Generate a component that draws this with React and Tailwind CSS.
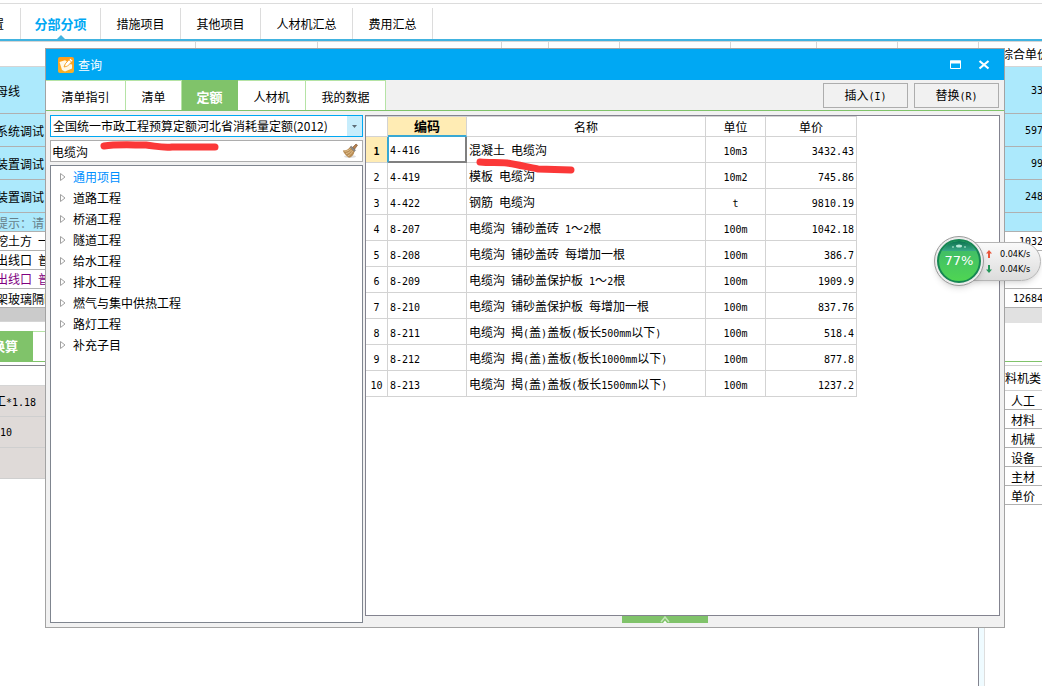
const mainTabs = ['措施项目', '其他项目', '人材机汇总', '费用汇总'];

const queryTabs = [
  { label: '清单指引', width: 'w-20' },
  { label: '清单', width: 'w-14' },
  { label: '定额', width: 'w-14', active: true },
  { label: '人材机', width: 'w-17' },
  { label: '我的数据', width: 'w-20' },
];

const chapters = [
  '通用项目',
  '道路工程',
  '桥涵工程',
  '隧道工程',
  '给水工程',
  '排水工程',
  '燃气与集中供热工程',
  '路灯工程',
  '补充子目',
];

const quotas = [
  { code: '4-416', name: '混凝土 电缆沟', unit: '10m3', price: '3432.43' },
  { code: '4-419', name: '模板 电缆沟', unit: '10m2', price: '745.86' },
  { code: '4-422', name: '钢筋 电缆沟', unit: 't', price: '9810.19' },
  { code: '8-207', name: '电缆沟 铺砂盖砖 1～2根', unit: '100m', price: '1042.18' },
  { code: '8-208', name: '电缆沟 铺砂盖砖 每增加一根', unit: '100m', price: '386.7' },
  { code: '8-209', name: '电缆沟 铺砂盖保护板 1～2根', unit: '100m', price: '1909.9' },
  { code: '8-210', name: '电缆沟 铺砂盖保护板 每增加一根', unit: '100m', price: '837.76' },
  { code: '8-211', name: '电缆沟 揭(盖)盖板(板长500mm以下)', unit: '100m', price: '518.4' },
  { code: '8-212', name: '电缆沟 揭(盖)盖板(板长1000mm以下)', unit: '100m', price: '877.8' },
  { code: '8-213', name: '电缆沟 揭(盖)盖板(板长1500mm以下)', unit: '100m', price: '1237.2' },
];

const blueRow = 'bg-[#ace9fc] border-[#b0b0b0]';

const leftRows = [
  { text: '母线', style: `h-[47px] ${blueRow}` },
  { text: '系统调试', style: `h-[33px] ${blueRow}` },
  { text: '装置调试', style: `h-[33px] ${blueRow}` },
  { text: '装置调试', style: `h-[33px] ${blueRow}` },
  { text: '提示：请', style: `h-[19px] text-[#66808a] ${blueRow}` },
  { text: '挖土方 一', style: 'h-[19px] border-[#b0b0b0]' },
  { text: '出线口 普', style: 'h-[19px] border-[#b0b0b0]' },
  { text: '出线口 普', style: 'h-[19px] border-[#b0b0b0] text-[#800080]' },
  { text: '架玻璃隔断', style: 'h-[19px] border-[#b0b0b0]' },
];

const rightRows = [
  { text: '33', style: `h-[47px] pl-[26px] ${blueRow}` },
  { text: '597', style: `h-[33px] pl-5 ${blueRow}` },
  { text: '99', style: `h-[33px] pl-[26px] ${blueRow}` },
  { text: '248', style: `h-[33px] pl-5 ${blueRow}` },
  { text: '', style: `h-[19px] ${blueRow}` },
  { text: '1032', style: 'h-[19px] pl-[14px] border-[#b0b0b0]' },
  { text: '', style: 'h-[38px] border-[#b0b0b0]' },
  { text: '12684', style: 'h-[19px] pl-2 border-[#b0b0b0]' },
];

const costTypes = ['人工', '材料', '机械', '设备', '主材', '单价'];

// Latin runs are set half as wide as a Chinese character
function Mixed({ text }) {
  return text.split(/([ -~]+)/).map((part, i) =>
    i % 2 ? (
      <span key={i} className="whitespace-pre font-['DejaVu_Sans_Mono',monospace] text-[10px]">{part}</span>
    ) : (
      part
    )
  );
}

function MainNav() {
  return (
    <header className="h-[42px] border-b border-[#d5d5d5] pt-[3px]">
      <nav className="flex h-[38px] items-stretch border-t border-b-2 border-t-[#dcdcdc] border-b-[#41b3e0] pt-1">
        <a href="#" className="flex w-[21px] items-center overflow-hidden border-r border-[#dcdcdc] whitespace-nowrap">
          <span className="-ml-2">置</span>
        </a>
        <a href="#" className="relative flex w-20 items-center justify-center border-r border-[#dcdcdc] text-[13px] font-bold text-[#00a8f3]">
          分部分项
          <svg className="absolute bottom-0 left-9 h-1 w-2" viewBox="0 0 8 4">
            <path d="M0 4 4 0l4 4z" fill="#41b3e0" />
          </svg>
        </a>
        {mainTabs.map(tab => (
          <a
            key={tab}
            href="#"
            className={`flex items-center justify-center border-r border-[#dcdcdc] ${tab === '人材机汇总' ? 'w-[92px]' : 'w-20'}`}
          >
            {tab}
          </a>
        ))}
      </nav>
    </header>
  );
}

function ColumnHeads() {
  return (
    <div className="flex h-[25px] border-b border-[#d5d5d5]">
      <div className="w-[196px] border-r border-[#d5d5d5]" />
      <div className="w-[122px] border-r border-[#d5d5d5]" />
      <div className="w-[184px] border-r border-[#d5d5d5]" />
      <div className="w-[47px] border-r border-[#d5d5d5]" />
      <div className="w-[71px] border-r border-[#d5d5d5]" />
      <div className="w-[111px] border-r border-[#d5d5d5]" />
      <div className="w-[86px] border-r border-[#d5d5d5]" />
      <div className="w-[81px] border-r border-[#d5d5d5]" />
      <div className="w-[81px] border-r border-[#d5d5d5]" />
      <div className="flex min-w-0 flex-1 items-center overflow-hidden pl-[22px] whitespace-nowrap">综合单价</div>
    </div>
  );
}

function LeftEdge() {
  return (
    <div className="w-[45px] overflow-hidden whitespace-nowrap">
      {leftRows.map((row, i) => (
        <div key={i} className={`flex items-center border-b pt-0.5 ${row.style}`}>
          <span className="-ml-1"><Mixed text={row.text} /></span>
        </div>
      ))}
      <div className="h-[14px] border-b border-[#d5d5d5] bg-[#cbcbcb]" />
      <div className="mt-[9px] flex h-[31px] border-b border-[#80c36a]">
        <button type="button" className="flex w-[33px] items-center bg-[#80c36a] text-[13px] font-bold text-white">
          <span className="-ml-2">换算</span>
        </button>
        <div className="flex-1 border-t border-[#b5e3a5]" />
      </div>
      <div className="mt-[3px] h-[21px] border-t border-b border-t-[#808088] border-b-[#d5d5d5]" />
      <div className="flex h-[31px] items-center border-b border-[#cfcfcf] bg-[#dfdad8] pt-0.5">
        <span className="-ml-1.5"><Mixed text="工*1.18" /></span>
      </div>
      <div className="flex h-[31px] items-center border-b border-[#cfcfcf] bg-[#dfdad8] pt-0.5">
        <Mixed text="10" />
      </div>
      <div className="h-[31px] border-b border-[#cfcfcf] bg-[#dfdad8]" />
    </div>
  );
}

function RightEdge() {
  return (
    <div className="w-[37px] overflow-hidden whitespace-nowrap">
      {rightRows.map((row, i) => (
        <div key={i} className={`flex items-center border-b pt-0.5 ${row.style}`}>
          <Mixed text={row.text} />
        </div>
      ))}
      <div className="h-[15px] bg-[#e1e1e1]" />
      <div className="h-[39px] border-b border-[#80c36a]" />
      <div className="mt-[3px] flex h-[26px] items-center border-t border-b border-[#d0d0d0]">料机类</div>
      {costTypes.map(type => (
        <div key={type} className="flex h-[19px] items-center border-b border-[#b0b0b0] pt-0.5 pl-1.5">{type}</div>
      ))}
    </div>
  );
}

function AppIcon() {
  return (
    <svg className="h-4 w-4" viewBox="0 0 16 16">
      <defs>
        <linearGradient id="orange" x1="0" y1="0" x2="0" y2="1">
          <stop offset="0" stopColor="#ff9c1a" />
          <stop offset="1" stopColor="#f7b02a" />
        </linearGradient>
      </defs>
      <rect width="16" height="16" rx="2" fill="url(#orange)" />
      <path d="M1.500 5 7 3.200 9 4.500 5.500 9.500 9 9l2-2 3 .5 0 4L7 14.500 4 13z" fill="#fff8e6" />
      <path d="M6.200 10 7.300 6.800 12.300 1.300 15 3.500 9.700 9z" fill="#fff" stroke="#f59a13" strokeWidth=".8" />
      <path d="m11 2.800 2.400 2.200" stroke="#f59a13" strokeWidth=".8" />
    </svg>
  );
}

function Broom() {
  return (
    <svg className="h-4 w-4" viewBox="0 0 16 16">
      <ellipse cx="8" cy="13.500" rx="6" ry="1.500" fill="#ddd" />
      <path d="m10 5 4-4 1.500 1.200L12 7z" fill="#b9824e" stroke="#7b5130" strokeWidth=".6" />
      <path d="M.8 7.500C4 7.500 6.500 6.500 8 4l4.500 4.500C12 11.500 10 14 7 14.800 4 13 2 10.500.8 7.500z" fill="#b98d55" />
      <path d="M2.500 8.200c3 0 4.500-1 6-2.500M4 10.500c2.500-.3 4-1.500 5.500-3.500M5.800 12.800c2.200-.8 3.800-2.500 4.700-4.800" fill="none" stroke="#e5c795" strokeWidth=".9" />
      <path d="m8 4 1.500-.8 4 4-1 1.300z" fill="#8d8a86" stroke="#66605a" strokeWidth=".5" />
    </svg>
  );
}

function ChapterTree() {
  return (
    <ul className="flex-1 overflow-hidden border border-[#7f858f] bg-white">
      {chapters.map((chapter, i) => (
        <li key={chapter} className="flex h-[21px] items-center gap-[7px] pl-[9px]">
          <svg className="h-2 w-[6px]" viewBox="0 0 6 8">
            <path d="M.5.500 5 4 .5 7.500z" fill="#fff" stroke="#a0a0a0" />
          </svg>
          <span className={i === 0 ? 'text-[#0090ff]' : ''}>{chapter}</span>
        </li>
      ))}
    </ul>
  );
}

function QuotaTable() {
  return (
    <table className="w-[491px] table-fixed border-separate border-spacing-0 text-black">
      <colgroup>
        <col className="w-[22px]" />
        <col className="w-[79px]" />
        <col className="w-[239px]" />
        <col className="w-[60px]" />
        <col className="w-[91px]" />
      </colgroup>
      <thead>
        <tr className="h-[21px]">
          <th className="border-t border-r border-b border-[#d3d3d3] p-0" />
          <th className="border-t border-r border-b-2 border-t-[#d3d3d3] border-r-[#d3d3d3] border-b-[#38a8d4] bg-[#ffecb4] p-0 text-[13px] leading-4 font-bold">编码</th>
          <th className="border-t border-r border-b border-[#d3d3d3] p-0 leading-4 font-normal">名称</th>
          <th className="border-t border-r border-b border-[#d3d3d3] p-0 leading-4 font-normal">单位</th>
          <th className="border-t border-r border-b border-[#d3d3d3] p-0 leading-4 font-normal">单价</th>
        </tr>
      </thead>
      <tbody>
        {quotas.map((quota, i) => (
          <tr key={quota.code} className="h-[26px]">
            <td className={`border-r border-b p-0 pt-0.5 text-center leading-4 ${i === 0 ? 'border-r-[#38a8d4] border-b-[#d3d3d3] bg-[#ffecb4] font-bold' : 'border-[#d3d3d3]'}`}>
              <Mixed text={String(i + 1)} />
            </td>
            <td
              className={
                i === 0
                  ? 'border-r-2 border-b-2 border-l border-r-[#808080] border-b-[#808080] border-l-[#38a8d4] p-0 pt-0.5 pl-px leading-4'
                  : 'border-r border-b border-[#d3d3d3] p-0 pt-0.5 pl-0.5 leading-4'
              }
            >
              <Mixed text={quota.code} />
            </td>
            <td className="border-r border-b border-[#d3d3d3] p-0 pt-0.5 pl-0.5 leading-4 whitespace-nowrap"><Mixed text={quota.name} /></td>
            <td className="border-r border-b border-[#d3d3d3] p-0 pt-0.5 text-center leading-4"><Mixed text={quota.unit} /></td>
            <td className="border-r border-b border-[#d3d3d3] p-0 pt-0.5 pr-0.5 text-right leading-4"><Mixed text={quota.price} /></td>
          </tr>
        ))}
      </tbody>
    </table>
  );
}

function QueryDialog() {
  return (
    <section
      role="dialog"
      aria-labelledby="query-title"
      className="absolute top-12 right-[37px] bottom-[58px] left-[45px] flex flex-col border border-[#a3a3a3] bg-[#f1f1f1]"
    >
      <div className="flex h-[31px] shrink-0 items-center gap-1 bg-[#00a8f3] pr-[14px] pl-3 text-white">
        <AppIcon />
        <h1 id="query-title" className="flex-1 text-xs">查询</h1>
        <button type="button" aria-label="最大化" className="mr-3">
          <svg className="h-3 w-3" viewBox="0 0 12 12">
            <path d="M.5 2h10v7.500H.5z" fill="none" stroke="#fff" />
            <path d="M0 1.500h11v3H0z" fill="#fff" />
          </svg>
        </button>
        <button type="button" aria-label="关闭">
          <svg className="h-3 w-3" viewBox="0 0 12 12">
            <path d="m1.500 2 9 7.500m0-7.500-9 7.500" stroke="#fff" strokeWidth="2.200" />
          </svg>
        </button>
      </div>

      <div className="flex h-[31px] shrink-0 items-stretch border-b border-[#80c36a] pr-[5px]">
        <div role="tablist" className="flex flex-1">
          {queryTabs.map(tab => (
            <button
              key={tab.label}
              type="button"
              role="tab"
              aria-selected={!!tab.active}
              className={`border-t border-r pt-0.5 ${tab.width} ${
                tab.active ? 'border-[#80c36a] bg-[#80c36a] text-[13px] font-bold text-white' : 'border-[#b5e3a5] bg-white'
              }`}
            >
              {tab.label}
            </button>
          ))}
        </div>
        <div className="flex items-center gap-1.5">
          <button type="button" className="h-[25px] w-[85px] border border-[#adadad] pt-0.5"><Mixed text="插入(I)" /></button>
          <button type="button" className="h-[25px] w-[85px] border border-[#adadad] pt-0.5"><Mixed text="替换(R)" /></button>
        </div>
      </div>

      <div className="flex min-h-0 flex-1 gap-0.5 p-1">
        <div className="relative flex w-[313px] shrink-0 flex-col gap-[3px]">
          <div className="relative">
            <select
              aria-label="定额库"
              className="block h-[22px] w-full appearance-none border border-[#00a8f3] bg-white pl-0.5 text-xs text-black"
            >
              <option>全国统一市政工程预算定额河北省消耗量定额(2012)</option>
            </select>
            <span className="pointer-events-none absolute top-px right-px flex h-5 w-[15px] items-center justify-center bg-[#c7edfc]">
              <svg className="h-[3px] w-[5px]" viewBox="0 0 5 3">
                <path d="M0 0h5L2.500 3z" fill="#5d6b75" />
              </svg>
            </span>
          </div>
          <div className="flex h-[22px] items-center border border-[#adadad] bg-white pr-1">
            <input aria-label="查询条件" defaultValue="电缆沟" className="h-full min-w-0 flex-1 pl-px text-xs text-black" />
            <button type="button" aria-label="清除"><Broom /></button>
          </div>
          <ChapterTree />
          <svg className="pointer-events-none absolute top-6 left-[50px] h-4 w-[120px]" viewBox="0 0 120 16">
            <path d="M4 7c12-2 28-1 42-1 10 1 16 3 26 2l43 0" fill="none" stroke="#fb3838" strokeWidth="7" strokeLinecap="round" strokeLinejoin="round" />
          </svg>
        </div>

        <div className="flex min-w-0 flex-1 flex-col">
          <div className="relative flex-1 overflow-hidden border border-[#83838f] bg-white">
            <QuotaTable />
            <svg className="pointer-events-none absolute top-10 left-[110px] h-[22px] w-[102px]" viewBox="0 0 102 22">
              <path d="M4 6c10 1 18 0 27 1 12 2 20 4 31 6l33 1" fill="none" stroke="#fb3838" strokeWidth="7" strokeLinecap="round" strokeLinejoin="round" />
            </svg>
          </div>
          <button type="button" aria-label="展开" className="mr-[35px] flex h-[7px] w-[86px] items-center justify-center self-center bg-[#80c36a]">
            <svg className="h-[7px] w-[10px]" viewBox="0 0 10 7">
              <path d="M1 6 5 1l4 5" fill="none" stroke="#c3e6b8" strokeWidth="1.500" />
              <path d="M3 7 5 4.500 7 7z" fill="#fff" />
            </svg>
          </button>
        </div>
      </div>
    </section>
  );
}

function SpeedRow({ up, value }) {
  return (
    <div className="flex items-center gap-2">
      <svg className="h-2 w-[6px]" viewBox="0 0 6 8">
        {up ? <path d="M3 0 6 3.500H4V8H2V3.500H0z" fill="#e8563a" /> : <path d="M3 8 0 4.500h2V0h2v4.500h2z" fill="#25975a" />}
      </svg>
      <span>{value}</span>
    </div>
  );
}

function SpeedBall() {
  return (
    <aside className="absolute top-[236px] right-px flex items-center font-['DejaVu_Sans_Condensed','DejaVu_Sans',sans-serif]">
      <div className="relative z-10 flex h-[50px] w-[50px] items-center justify-center rounded-full border border-[#9a9a9a] bg-[#ececec] shadow-md">
        <div className="relative flex h-11 w-11 items-center justify-center overflow-hidden rounded-full border-2 border-[#168653] bg-linear-to-b from-[#3db76a] to-[#4fd552]">
          <div className="absolute inset-x-0 top-0 h-[10px] bg-linear-to-b from-[#08724f] to-[#39a886]" />
          <svg className="absolute top-0.5 left-3 h-1.5 w-4" viewBox="0 0 16 6">
            <ellipse cx="8" cy="3" rx="3" ry="1.500" fill="#b8e9d8" />
            <circle cx="2" cy="4" r="1" fill="#8bcfb5" />
            <circle cx="14" cy="4" r="1" fill="#8bcfb5" />
          </svg>
          <span className="relative font-['DejaVu_Sans',sans-serif] text-[13px] text-white">77%</span>
        </div>
      </div>
      <div className="-ml-3 flex h-[39px] w-[69px] flex-col justify-center gap-px rounded-r-full border border-[#b5b5b5] bg-linear-to-b from-[#fafafa] to-[#dcdcdc] pl-[13px] text-[9px] leading-[14px] whitespace-nowrap text-black shadow-md">
        <SpeedRow up value="0.04K/s" />
        <SpeedRow value="0.04K/s" />
      </div>
    </aside>
  );
}

export default function App() {
  return (
    <div className="relative flex min-h-screen flex-col overflow-hidden bg-white font-['Noto_Sans_CJK_SC',sans-serif] text-xs leading-4 text-black">
      <MainNav />
      <ColumnHeads />
      <div className="flex flex-1 justify-between">
        <LeftEdge />
        <div className="ml-auto w-[7px] border-x border-l-[#83838f] border-r-[#dedede] bg-[#effbff]" />
        <div className="w-5" />
        <RightEdge />
      </div>
      <QueryDialog />
      <SpeedBall />
    </div>
  );
}
